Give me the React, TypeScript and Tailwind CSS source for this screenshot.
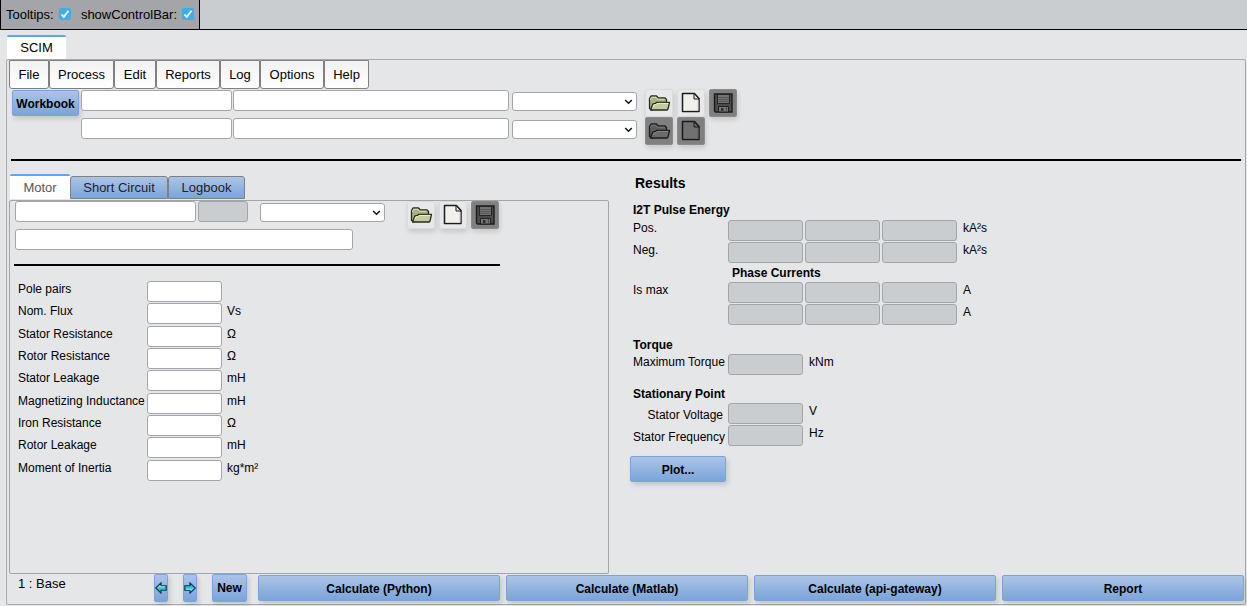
import { useState } from "react";

type IconName = "open" | "new" | "save";

const menuItems = [
  { name: "File", width: "w-[40px]" },
  { name: "Process", width: "w-[65px]" },
  { name: "Edit", width: "w-[42px]" },
  { name: "Reports", width: "w-[64px]" },
  { name: "Log", width: "w-[40px]" },
  { name: "Options", width: "w-[64px]" },
  { name: "Help", width: "w-[45px]" },
];

const motorFields = [
  { id: "polePairs", label: "Pole pairs", unit: "" },
  { id: "nomFlux", label: "Nom. Flux", unit: "Vs" },
  { id: "statorResistance", label: "Stator Resistance", unit: "Ω" },
  { id: "rotorResistance", label: "Rotor Resistance", unit: "Ω" },
  { id: "statorLeakage", label: "Stator Leakage", unit: "mH" },
  { id: "magnetizingInductance", label: "Magnetizing Inductance", unit: "mH" },
  { id: "ironResistance", label: "Iron Resistance", unit: "Ω" },
  { id: "rotorLeakage", label: "Rotor Leakage", unit: "mH" },
  { id: "inertia", label: "Moment of Inertia", unit: "kg*m²" },
];

const actions = [
  "Calculate (Python)",
  "Calculate (Matlab)",
  "Calculate (api-gateway)",
  "Report",
];

const inputClass =
  "block h-[21px] rounded-[3px] border border-[#a3a5a9] bg-white px-1 text-[12px] disabled:bg-[#c9cdd0]";
const blueButton =
  "rounded-[2px] border border-[#7ba4db] bg-linear-to-b from-[#abc4e8] to-[#7ba4d8] text-[12px] font-bold shadow-[2px_3px_5px_rgba(0,0,0,0.14)]";

function FolderIcon({ dark }: { dark: boolean }) {
  return (
    <svg viewBox="0 0 28 28" className="size-[28px]" stroke={dark ? "#1c1c1c" : "#292b1c"} strokeWidth="1.3" strokeLinejoin="round">
      <path d="M4.5 19.5V9.5L6 7h5.5l1.8 2H20l1.5 1.5v3.2L7 21Z" fill={dark ? "#5c5c5c" : "#a9b184"} />
      <path d="M5.8 11V9.4l.9-1.2h4.3l1.7 2h7" fill="none" stroke={dark ? "#797979" : "#dfe5c2"} strokeWidth="1" />
      <path d="M5.5 21 8 14.8l2.5-.3 1-1.2H24.5L23 20l-1 1Z" fill={dark ? "#6b6b6b" : "#c3cca0"} />
      <path d="m8 18 1-2.2 2.2-.2 1-1.2h11" fill="none" stroke={dark ? "#858585" : "#eaf0d2"} strokeWidth="1" />
    </svg>
  );
}

function FileIcon({ dark }: { dark: boolean }) {
  return (
    <svg viewBox="0 0 28 28" className="size-[28px]" strokeLinejoin="round">
      <path d="M5.5 4.5h12l4.5 5V22.5H5.5Z" fill={dark ? "#717171" : "#f1f0ed"} stroke="#1b1b1b" strokeWidth="1.5" />
      <path d="M21 11v10.5H6.5" fill="none" stroke={dark ? "#606060" : "#d3cfc8"} strokeWidth="1" />
      <path d="M17 4.5V10h5Z" fill={dark ? "#666" : "#e4e3df"} stroke="#1b1b1b" strokeWidth="1" />
    </svg>
  );
}

function DiskIcon() {
  return (
    <svg viewBox="0 0 28 28" className="size-[28px]">
      <path d="M5.5 5h17.5v18h-16.5l-1-1Z" fill="#4b4b4b" stroke="#1b1b1b" strokeWidth="1.4" />
      <path d="M8.5 5.5h12v9h-12Z" fill="#737373" stroke="#262626" />
      <path d="M9 8.5h11M9 10.5h11M9 12.5h11" stroke="#5a5a5a" strokeWidth="1" />
      <path d="M9.5 17.5h10V23h-10Z" fill="#767676" stroke="#222" />
      <path d="M12 19h2.5v3H12Z" fill="#303030" />
      <path d="M17.5 18v4.5" stroke="#4d4d4d" />
    </svg>
  );
}

function IconButton({
  icon,
  label,
  disabled = false,
}: {
  icon: IconName;
  label: string;
  disabled?: boolean;
}) {
  return (
    <button
      type="button"
      aria-label={label}
      disabled={disabled}
      className="size-[28px] rounded-[3px] bg-[#e7e8ea] shadow-[inset_0_0_0_1px_#d9dbdd,1px_3px_5px_rgba(0,0,0,0.13)] disabled:bg-[#808080] disabled:shadow-[inset_0_0_0_1px_#8b8b8b,1px_3px_5px_rgba(0,0,0,0.13)]"
    >
      {icon === "open" && <FolderIcon dark={disabled} />}
      {icon === "new" && <FileIcon dark={disabled} />}
      {icon === "save" && <DiskIcon />}
    </button>
  );
}

function Select({ label }: { label: string }) {
  return (
    <div className="relative h-[19px] w-[125px]">
      <select
        aria-label={label}
        className="block h-full w-full appearance-none rounded-[3px] border border-[#a3a5a9] bg-white px-1 text-[12px]"
      />
      <svg viewBox="0 0 9 6" className="pointer-events-none absolute top-[7px] right-[4px] h-[6px] w-[9px]">
        <path d="m1.2 1 3.3 3.3L7.8 1" fill="none" stroke="#111" strokeWidth="1.5" />
      </svg>
    </div>
  );
}

function ArrowButton({ label, flip = false }: { label: string; flip?: boolean }) {
  return (
    <button type="button" aria-label={label} className={`${blueButton} flex h-[28px] w-[14px] items-center justify-center`}>
      <svg viewBox="0 0 12 12" className={`size-[12px] shrink-0 ${flip ? "rotate-180" : ""}`}>
        <path d="M.8 6 6 .9v2.8h5.2v4.6H6v2.8Z" fill="#2cc3dc" stroke="#123044" strokeWidth="1.1" />
        <path d="M2.8 5.8 5 3.6v1.2h5" fill="none" stroke="#a9f1f7" strokeWidth="0.9" />
      </svg>
    </button>
  );
}

function Check({ checked, onChange }: { checked: boolean; onChange: (v: boolean) => void }) {
  return (
    <span className="relative mb-[2px] block size-[12px]">
      <input
        type="checkbox"
        checked={checked}
        onChange={(e) => onChange(e.target.checked)}
        className="block size-[12px] appearance-none rounded-[2px] bg-white checked:bg-[#3daee9]"
      />
      {checked && (
        <svg viewBox="0 0 12 12" className="pointer-events-none absolute inset-0 size-[12px]">
          <path d="m2.5 6.5 2.3 2.3 4.7-6" fill="none" stroke="#fff" strokeWidth="1.8" />
        </svg>
      )}
    </span>
  );
}

function ResultInputs({ name, count = 1 }: { name: string; count?: number }) {
  return (
    <div className="flex gap-[2px]">
      {Array.from({ length: count }, (_, i) => (
        <input key={i} aria-label={`${name} ${i + 1}`} disabled className={`${inputClass} w-[75px]`} />
      ))}
    </div>
  );
}

function MotorPanel() {
  return (
    <div className="flex-1 rounded-[2px] border border-[#a3a5a9] pl-[4px]">
      <div className="flex pl-px">
        <div>
          <div className="flex">
            <input aria-label="Motor name" className={`${inputClass} w-[181px]`} />
            <input aria-label="Motor revision" disabled className={`${inputClass} ml-[2px] w-[50px]`} />
            <div className="ml-[12px] pt-[2px]">
              <Select label="Motor version" />
            </div>
          </div>
          <input aria-label="Motor description" className={`${inputClass} mt-[7px] w-[338px]`} />
        </div>
        <div className="ml-[22px] flex gap-[4px]">
          <IconButton icon="open" label="Open motor" />
          <IconButton icon="new" label="New motor" />
          <IconButton icon="save" label="Save motor" disabled />
        </div>
      </div>
      <hr className="mt-[14px] w-[486px] border-t-2 border-black" />
      <div className="mt-[15px] grid h-[201px] grid-rows-9 pl-[4px]">
        {motorFields.map((f) => (
          <div key={f.id} className="flex">
            <label htmlFor={f.id} className="w-[129px] leading-[16px] whitespace-nowrap">
              {f.label}
            </label>
            <input id={f.id} className={`${inputClass} w-[75px]`} />
            <span className="ml-[5px] leading-[16px]">{f.unit}</span>
          </div>
        ))}
      </div>
    </div>
  );
}

function Results() {
  return (
    <section className="pt-[1px] pl-[6px] leading-[16px]">
      <h2 className="pl-[2px] text-[14px] leading-[16px] font-bold">Results</h2>
      <h3 className="mt-[11px] font-bold">I2T Pulse Energy</h3>
      <div className="mt-[2px] grid grid-cols-[95px_auto_1fr] gap-y-[1px]">
        <span>Pos.</span>
        <ResultInputs name="Pos." count={3} />
        <span className="pl-[6px]">kA²s</span>
        <span>Neg.</span>
        <ResultInputs name="Neg." count={3} />
        <span className="pl-[6px]">kA²s</span>
      </div>
      <h3 className="mt-[2px] pl-[99px] font-bold">Phase Currents</h3>
      <div className="mt-px grid grid-cols-[95px_auto_1fr] gap-y-[1px]">
        <span>Is max</span>
        <ResultInputs name="Is max" count={3} />
        <span className="pl-[6px]">A</span>
        <span />
        <ResultInputs name="Is max phase" count={3} />
        <span className="pl-[6px]">A</span>
      </div>
      <h3 className="mt-[12px] font-bold">Torque</h3>
      <div className="mt-px grid grid-cols-[95px_auto_1fr]">
        <span className="whitespace-nowrap">Maximum Torque</span>
        <ResultInputs name="Maximum Torque" />
        <span className="pl-[6px]">kNm</span>
      </div>
      <h3 className="mt-[11px] font-bold">Stationary Point</h3>
      <div className="mt-px grid grid-cols-[95px_auto_1fr] gap-y-[1px]">
        <span className="pt-[4px] pr-[5px] text-right whitespace-nowrap">Stator Voltage</span>
        <ResultInputs name="Stator Voltage" />
        <span className="pl-[6px]">V</span>
        <span className="pt-[4px] whitespace-nowrap">Stator Frequency</span>
        <ResultInputs name="Stator Frequency" />
        <span className="pl-[6px]">Hz</span>
      </div>
      <button type="button" className={`${blueButton} -ml-[3px] mt-[10px] h-[26px] w-[96px] pt-[2px]`}>
        Plot...
      </button>
    </section>
  );
}

export default function App() {
  const [tooltips, setTooltips] = useState(true);
  const [controlBar, setControlBar] = useState(true);

  return (
    <div className="flex min-h-screen flex-col bg-[#e5e6e8] font-['Liberation_Sans',Arial,sans-serif] text-[12px] text-black">
      {/* Control bar */}
      <header className="flex h-[30px] border-b border-black bg-[#c9cdd0] text-[13px]">
        <div className="flex w-[200px] items-center justify-between border-x border-black bg-[#a3a5a9] px-[5px]">
          <label className="flex items-center gap-[5px]">
            Tooltips:
            <Check checked={tooltips} onChange={setTooltips} />
          </label>
          <label className="flex items-center gap-[5px]">
            showControlBar:
            <Check checked={controlBar} onChange={setControlBar} />
          </label>
        </div>
      </header>

      <div className="flex flex-1 flex-col px-[1px] pt-[5px] pb-[1px] pl-[6px]">
        <div role="tablist" className="flex pl-px">
          <button
            type="button"
            role="tab"
            aria-selected="true"
            className="h-[24px] w-[59px] rounded-t-[2px] border-t-2 border-[#5ba7f0] bg-white text-[13px]"
          >
            SCIM
          </button>
        </div>

        <main className="flex flex-1 flex-col rounded-[2px] border border-[#a9a9ab]">
          <nav className="flex pl-[2px]">
            {menuItems.map((item) => (
              <button
                key={item.name}
                type="button"
                className={`${item.width} h-[29px] rounded-b-[3px] border border-[#808080] bg-linear-to-b from-[#f2f2f2] to-white text-[13px]`}
              >
                {item.name}
              </button>
            ))}
          </nav>

          {/* Workbook */}
          <div className="flex pl-[5px]">
            <button type="button" className={`${blueButton} mt-px h-[26px] w-[67px] pt-[2px]`}>
              Workbook
            </button>
            <div className="ml-[2px] flex flex-col gap-[7px] pt-px">
              {["Workbook", "Variant"].map((row) => (
                <div key={row} className="flex">
                  <input aria-label={`${row} name`} className={`${inputClass} w-[151px]`} />
                  <input aria-label={`${row} description`} className={`${inputClass} ml-px w-[276px]`} />
                  <div className="ml-[3px] pt-[2px]">
                    <Select label={`${row} version`} />
                  </div>
                </div>
              ))}
            </div>
            <div className="ml-[8px] grid grid-cols-3 gap-x-[4px]">
              <IconButton icon="open" label="Open workbook" />
              <IconButton icon="new" label="New workbook" />
              <IconButton icon="save" label="Save workbook" disabled />
              <IconButton icon="open" label="Open variant" disabled />
              <IconButton icon="new" label="New variant" disabled />
            </div>
          </div>
          <hr className="mx-[4px] mt-[14px] border-t-2 border-black" />

          <div className="grid flex-1 grid-cols-2 pt-[13px] pl-[2px]">
            <div className="mr-[18px] flex flex-col">
              <div role="tablist" className="flex items-end pb-px pl-px text-[13px]">
                <button
                  type="button"
                  role="tab"
                  aria-selected="true"
                  className="h-[25px] w-[60px] rounded-t-[2px] border-t-2 border-[#5ba7f0] bg-white text-[#555]"
                >
                  Motor
                </button>
                <button
                  type="button"
                  role="tab"
                  aria-selected="false"
                  className="h-[23px] w-[98px] rounded-t-[3px] border border-[#808080] bg-linear-to-b from-[#abc4e8] to-[#7ba4d8] text-[#222]"
                >
                  Short Circuit
                </button>
                <button
                  type="button"
                  role="tab"
                  aria-selected="false"
                  className="h-[23px] w-[77px] rounded-t-[3px] border border-[#808080] bg-linear-to-b from-[#abc4e8] to-[#7ba4d8] text-[#222]"
                >
                  Logbook
                </button>
              </div>
              <MotorPanel />
            </div>
            <Results />
          </div>

          {/* Bottom actions */}
          <footer className="flex h-[30px] pl-[11px]">
            <span className="w-[136px] pt-[2px] text-[13px] leading-[16px]">1 : Base</span>
            <div className="flex gap-[15px]">
              <ArrowButton label="Previous" />
              <ArrowButton label="Next" flip />
              <button type="button" className={`${blueButton} h-[28px] w-[35px]`}>
                New
              </button>
            </div>
            <div className="ml-[11px] flex flex-1 gap-[6px] pt-px pr-px">
              {actions.map((a) => (
                <button key={a} type="button" className={`${blueButton} h-[26px] flex-1 pt-[2px]`}>
                  {a}
                </button>
              ))}
            </div>
          </footer>
        </main>
      </div>
    </div>
  );
}
